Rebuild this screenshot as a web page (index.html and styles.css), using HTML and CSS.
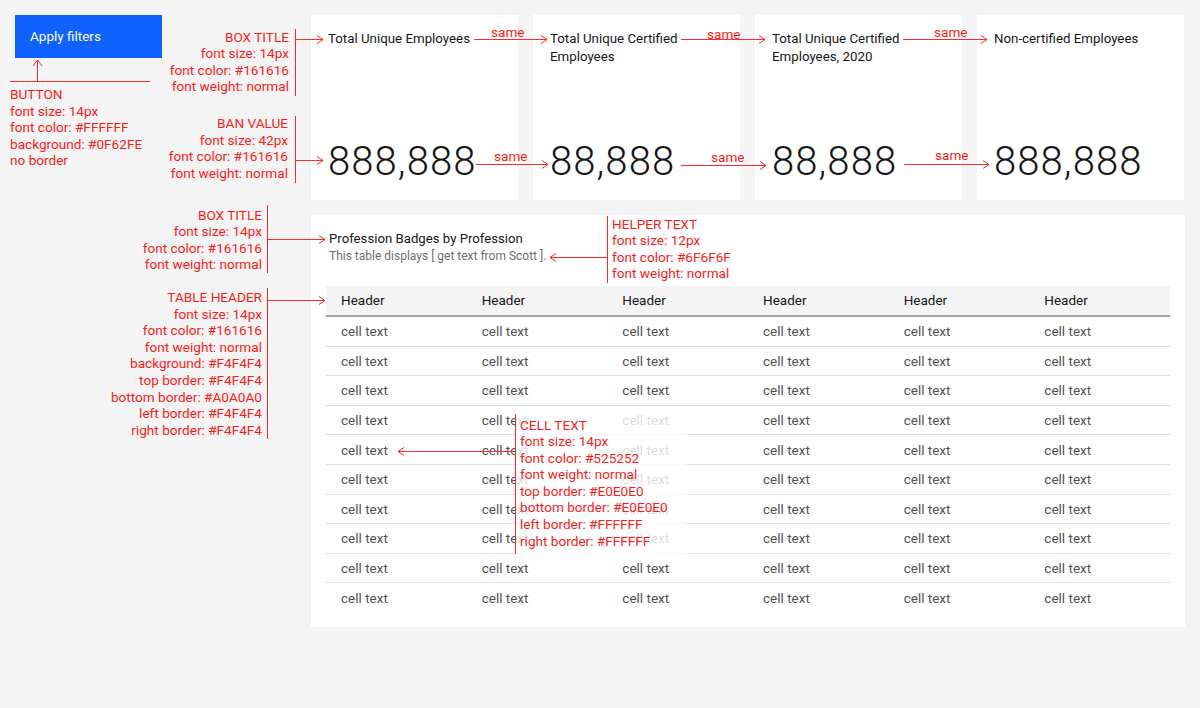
FILE: index.html
```html
<!DOCTYPE html>
<html lang="en">
<head>
<meta charset="utf-8">
<title>Dashboard spec</title>
<link rel="stylesheet" href="styles.css">
</head>
<body>
<div class="page">
  <div class="top">
    <div class="side">
      <button class="btn">Apply filters</button>
    </div>
    <div class="cards">
      <div class="card">
        <div class="card-title">Total Unique Employees</div>
        <div class="ban">888,888</div>
      </div>
      <div class="card">
        <div class="card-title">Total Unique Certified Employees</div>
        <div class="ban">88,888</div>
      </div>
      <div class="card">
        <div class="card-title">Total Unique Certified Employees, 2020</div>
        <div class="ban">88,888</div>
      </div>
      <div class="card">
        <div class="card-title">Non-certified Employees</div>
        <div class="ban">888,888</div>
      </div>
    </div>
  </div>
  <div class="bottom">
    <section class="table-card">
      <div class="tc-title">Profession Badges by Profession</div>
      <div class="helper">This table displays [ get text from Scott ].</div>
      <div class="table">
        <div class="row head"><span>Header</span><span>Header</span><span>Header</span><span>Header</span><span>Header</span><span>Header</span></div>
        <div class="row"><span>cell text</span><span>cell text</span><span>cell text</span><span>cell text</span><span>cell text</span><span>cell text</span></div>
        <div class="row"><span>cell text</span><span>cell text</span><span>cell text</span><span>cell text</span><span>cell text</span><span>cell text</span></div>
        <div class="row"><span>cell text</span><span>cell text</span><span>cell text</span><span>cell text</span><span>cell text</span><span>cell text</span></div>
        <div class="row"><span>cell text</span><span>cell text</span><span>cell text</span><span>cell text</span><span>cell text</span><span>cell text</span></div>
        <div class="row"><span>cell text</span><span>cell text</span><span>cell text</span><span>cell text</span><span>cell text</span><span>cell text</span></div>
        <div class="row"><span>cell text</span><span>cell text</span><span>cell text</span><span>cell text</span><span>cell text</span><span>cell text</span></div>
        <div class="row"><span>cell text</span><span>cell text</span><span>cell text</span><span>cell text</span><span>cell text</span><span>cell text</span></div>
        <div class="row"><span>cell text</span><span>cell text</span><span>cell text</span><span>cell text</span><span>cell text</span><span>cell text</span></div>
        <div class="row"><span>cell text</span><span>cell text</span><span>cell text</span><span>cell text</span><span>cell text</span><span>cell text</span></div>
        <div class="row"><span>cell text</span><span>cell text</span><span>cell text</span><span>cell text</span><span>cell text</span><span>cell text</span></div>
      </div>
    </section>
  </div>
</div>

<div class="cell-veil"></div>

<svg class="lines" width="1200" height="708" viewBox="0 0 1200 708" fill="none" stroke="#ff2b2b" stroke-width="1">
  <line x1="10" y1="81.5" x2="150" y2="81.5"/>
  <line x1="37.5" y1="81" x2="37.5" y2="60"/>
  <polyline points="33,66 37.5,60 42,66"/>
  <line x1="295.5" y1="29" x2="295.5" y2="96"/>
  <line x1="295" y1="39.5" x2="323" y2="39.5"/>
  <polyline points="317,35.5 323,39.5 317,43.5"/>
  <line x1="295.5" y1="116" x2="295.5" y2="183"/>
  <line x1="295" y1="160.5" x2="323" y2="160.5"/>
  <polyline points="317,156.5 323,160.5 317,164.5"/>
  <line x1="474" y1="39.5" x2="547" y2="39.5"/>
  <polyline points="541,35.5 547,39.5 541,43.5"/>
  <line x1="681" y1="39.5" x2="765" y2="39.5"/>
  <polyline points="759,35.5 765,39.5 759,43.5"/>
  <line x1="903" y1="39.5" x2="987" y2="39.5"/>
  <polyline points="981,35.5 987,39.5 981,43.5"/>
  <line x1="476" y1="164.5" x2="548" y2="164.5"/>
  <polyline points="542,160.5 548,164.5 542,168.5"/>
  <line x1="681" y1="165.5" x2="766" y2="165.5"/>
  <polyline points="760,161.5 766,165.5 760,169.5"/>
  <line x1="904" y1="164.5" x2="989" y2="164.5"/>
  <polyline points="983,160.5 989,164.5 983,168.5"/>
  <line x1="267.5" y1="205" x2="267.5" y2="273"/>
  <line x1="268" y1="239.5" x2="325" y2="239.5"/>
  <polyline points="319,235.5 325,239.5 319,243.5"/>
  <line x1="267.5" y1="288" x2="267.5" y2="439"/>
  <line x1="268" y1="300.5" x2="325" y2="300.5"/>
  <polyline points="319,296.5 325,300.5 319,304.5"/>
  <line x1="607.5" y1="216" x2="607.5" y2="283"/>
  <line x1="607" y1="257.5" x2="550" y2="257.5"/>
  <polyline points="556,253.5 550,257.5 556,261.5"/>
  <line x1="515.5" y1="414" x2="515.5" y2="554"/>
  <line x1="515" y1="451.5" x2="398" y2="451.5"/>
  <polyline points="404,447.5 398,451.5 404,455.5"/>
</svg>

<div class="note note-button">BUTTON<br>font size: 14px<br>font color: #FFFFFF<br>background: #0F62FE<br>no border</div>
<div class="note note-right note-title1">BOX TITLE<br>font size: 14px<br>font color: #161616<br>font weight: normal</div>
<div class="note note-right note-ban">BAN VALUE<br>font size: 42px<br>font color: #161616<br>font weight: normal</div>
<div class="note note-right note-title2">BOX TITLE<br>font size: 14px<br>font color: #161616<br>font weight: normal</div>
<div class="note note-right note-header">TABLE HEADER<br>font size: 14px<br>font color: #161616<br>font weight: normal<br>background: #F4F4F4<br>top border: #F4F4F4<br>bottom border: #A0A0A0<br>left border: #F4F4F4<br>right border: #F4F4F4</div>
<div class="note note-helper">HELPER TEXT<br>font size: 12px<br>font color: #6F6F6F<br>font weight: normal</div>
<div class="note note-cell">CELL TEXT<br>font size: 14px<br>font color: #525252<br>font weight: normal<br>top border: #E0E0E0<br>bottom border: #E0E0E0<br>left border: #FFFFFF<br>right border: #FFFFFF</div>

<div class="same same-t1">same</div>
<div class="same same-t2">same</div>
<div class="same same-t3">same</div>
<div class="same same-b1">same</div>
<div class="same same-b2">same</div>
<div class="same same-b3">same</div>
</body>
</html>
```

FILE: styles.css
```css
* { box-sizing: border-box; }

html, body {
  margin: 0;
  padding: 0;
  background: #f4f4f4;
  font-family: Roboto, "Liberation Sans", sans-serif;
  width: 1200px;
  height: 708px;
  overflow: hidden;
  position: relative;
}

.page {
  padding: 15px;
}

.top {
  display: flex;
}

.side {
  width: 296px;
  flex: none;
}

.btn {
  display: block;
  width: 147px;
  height: 43px;
  margin: 0;
  padding: 0 0 1px 15px;
  border: none;
  background: #0f62fe;
  color: #ffffff;
  font-family: inherit;
  font-size: 13.5px;
  text-align: left;
}

.cards {
  display: flex;
  gap: 15px;
}

.card {
  width: 207px;
  height: 185px;
  background: #ffffff;
  padding: 15px 17px 14px 17px;
  display: flex;
  flex-direction: column;
  justify-content: space-between;
}

.card-title {
  font-size: 13.3px;
  line-height: 18px;
  color: #161616;
  padding-right: 10px;
}

.ban {
  font-size: 40px;
  font-weight: 300;
  line-height: 48px;
  letter-spacing: 1.1px;
  color: #161616;
}

.bottom {
  margin-top: 15px;
  padding-left: 296px;
}

.table-card {
  width: 874px;
  background: #ffffff;
  padding: 15px 15px 14px 15px;
}

.tc-title {
  margin-left: 3px;
  font-size: 13.2px;
  line-height: 18px;
  color: #161616;
}

.helper {
  margin-left: 3px;
  font-size: 12px;
  line-height: 16px;
  color: #6f6f6f;
}

.table {
  margin-top: 22px;
}

.row {
  display: grid;
  grid-template-columns: repeat(6, 1fr);
  height: 29.6px;
  align-items: center;
  border-bottom: 1px solid #e0e0e0;
  font-size: 13.5px;
  color: #525252;
}

.row:last-child {
  border-bottom: none;
}

.row span {
  padding-left: 15px;
}

.row.head {
  height: 31px;
  background: #f4f4f4;
  border-top: 1px solid #f4f4f4;
  border-bottom: 2px solid #a0a0a0;
  color: #161616;
  padding-bottom: 2px;
}

/* annotation overlay */
.cell-veil {
  position: absolute;
  left: 515px;
  top: 412px;
  width: 172px;
  height: 142px;
  background: rgba(255, 255, 255, 0.8);
}

.lines {
  position: absolute;
  left: 0;
  top: 0;
}

.note {
  position: absolute;
  color: #ff1a1a;
  font-size: 13.6px;
  line-height: 16.6px;
  white-space: nowrap;
}

.note-right {
  text-align: right;
}

.note-button { left: 10px; top: 86px; }
.note-title1 { right: 911px; top: 28.5px; }
.note-ban    { right: 912px; top: 115px; }
.note-title2 { right: 938px; top: 206.5px; }
.note-header { right: 938px; top: 289px; }
.note-helper { left: 612px; top: 215.5px; }
.note-cell   { left: 520px; top: 416.5px; }

.same {
  position: absolute;
  color: #ff1a1a;
  font-size: 13.6px;
  line-height: 16px;
}

.same-t1 { left: 491px; top: 24px; }
.same-t2 { left: 707px; top: 26px; }
.same-t3 { left: 934px; top: 24px; }
.same-b1 { left: 494px; top: 148px; }
.same-b2 { left: 711px; top: 149px; }
.same-b3 { left: 935px; top: 147px; }
```
